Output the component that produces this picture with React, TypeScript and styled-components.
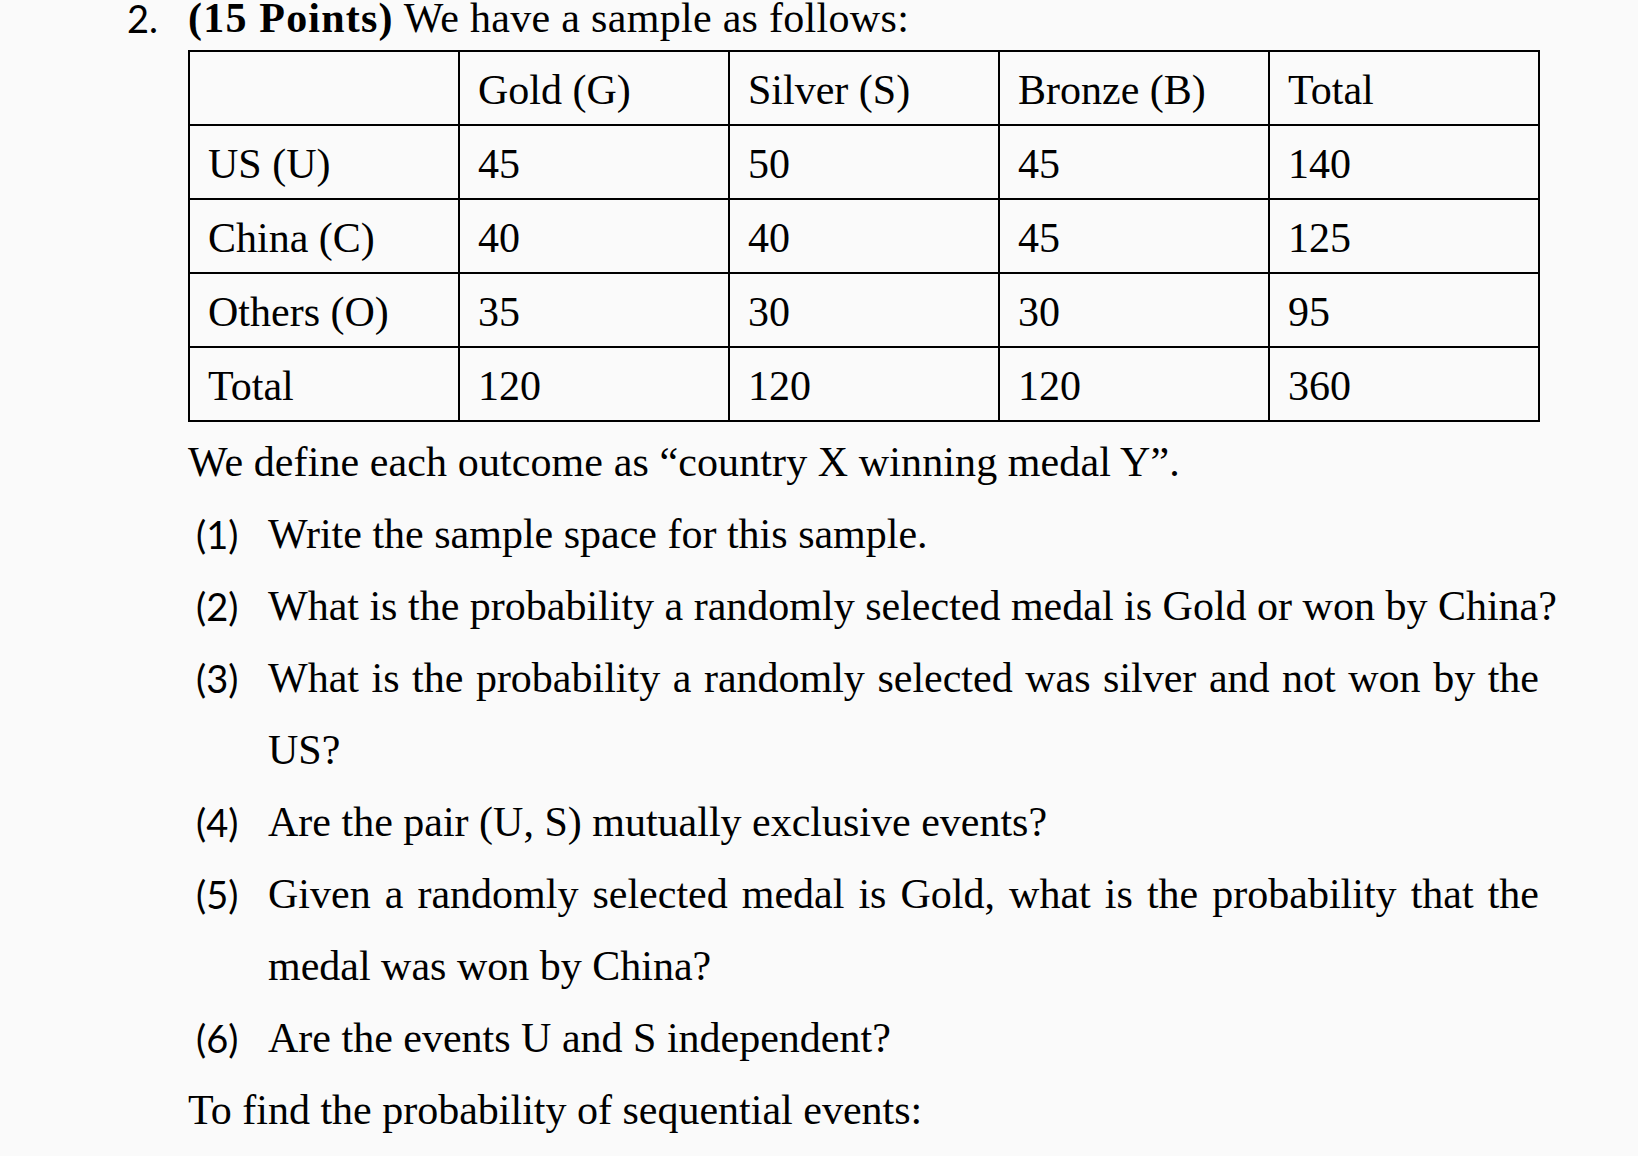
import React from "react";
import styled, { createGlobalStyle } from "styled-components";

const GlobalStyle = createGlobalStyle`
  html, body {
    margin: 0;
    padding: 0;
    background: #fafafa;
  }
  body {
    color: #000;
    font-family: "Liberation Serif", "Times New Roman", serif;
  }
`;

const Page = styled.div`
  padding-left: 127px;
  width: 1511px;
`;

const Question = styled.section`
  display: grid;
  grid-template-columns: 61px 1352px;
`;

const QNumber = styled.div`
  font-family: Lato, "Liberation Sans", sans-serif;
  font-size: 38px;
  line-height: 36px;
`;

const Body = styled.div`
  display: flex;
  flex-direction: column;
`;

const Title = styled.div`
  font-size: 42px;
  line-height: 36px;
  height: 50px;
  white-space: nowrap;
  letter-spacing: 0.3px;
`;

const Bold = styled.b`
  font-weight: 700;
  letter-spacing: 1.2px;
`;

const Table = styled.table`
  border-collapse: collapse;
  width: 1352px;
  table-layout: fixed;
  font-size: 42px;
`;

const Row = styled.tr`
  height: 74px;
`;

const Cell = styled.td`
  border: 2px solid #000;
  padding: 3px 0 0 18px;
  vertical-align: middle;
  line-height: 40px;
  white-space: nowrap;
`;

const Line = styled.p`
  margin: 0;
  font-size: 42px;
  line-height: 72px;
  white-space: nowrap;
`;

const Intro = styled(Line)`
  margin-top: 4px;
  letter-spacing: 0.1px;
`;

const Item = styled.div`
  display: grid;
  grid-template-columns: 72px 1271px;
  margin-left: 8px;
`;

const ItemNum = styled.span`
  font-family: Lato, "Liberation Sans", sans-serif;
  font-size: 38px;
  line-height: 72px;
`;

const ItemText = styled.div`
  font-size: 42px;
  line-height: 72px;
`;

const Justified = styled.div`
  text-align: justify;
  text-align-last: justify;
  white-space: nowrap;
`;

const Plain = styled.div<{ $spacing?: string }>`
  white-space: nowrap;
  word-spacing: ${(p) => p.$spacing ?? "normal"};
`;

const header = ["", "Gold (G)", "Silver (S)", "Bronze (B)", "Total"];
const rows = [
  ["US (U)", "45", "50", "45", "140"],
  ["China (C)", "40", "40", "45", "125"],
  ["Others (O)", "35", "30", "30", "95"],
  ["Total", "120", "120", "120", "360"],
];

type ItemProps = { n: number; children: React.ReactNode };
const ListItem = ({ n, children }: ItemProps) => (
  <Item>
    <ItemNum>({n})</ItemNum>
    <ItemText>{children}</ItemText>
  </Item>
);

export default function App() {
  return (
    <>
      <GlobalStyle />
      <Page>
        <Question>
          <QNumber>2.</QNumber>
          <Body>
            <Title>
              <Bold>(15 Points)</Bold> We have a sample as follows:
            </Title>
            <Table>
              <tbody>
                <Row>
                  {header.map((h, i) => (
                    <Cell key={i}>{h}</Cell>
                  ))}
                </Row>
                {rows.map((r, i) => (
                  <Row key={i}>
                    {r.map((c, j) => (
                      <Cell key={j}>{c}</Cell>
                    ))}
                  </Row>
                ))}
              </tbody>
            </Table>
            <Intro>We define each outcome as “country X winning medal Y”.</Intro>
            <ListItem n={1}>
              <Plain>Write the sample space for this sample.</Plain>
            </ListItem>
            <ListItem n={2}>
              <Plain>
                What is the probability a randomly selected medal is Gold or won by China?
              </Plain>
            </ListItem>
            <ListItem n={3}>
              <Justified>
                What is the probability a randomly selected was silver and not won by the
              </Justified>
              <Plain>US?</Plain>
            </ListItem>
            <ListItem n={4}>
              <Plain>Are the pair (U, S) mutually exclusive events?</Plain>
            </ListItem>
            <ListItem n={5}>
              <Justified>
                Given a randomly selected medal is Gold, what is the probability that the
              </Justified>
              <Plain>medal was won by China?</Plain>
            </ListItem>
            <ListItem n={6}>
              <Plain>Are the events U and S independent?</Plain>
            </ListItem>
            <Line>To find the probability of sequential events:</Line>
          </Body>
        </Question>
      </Page>
    </>
  );
}
